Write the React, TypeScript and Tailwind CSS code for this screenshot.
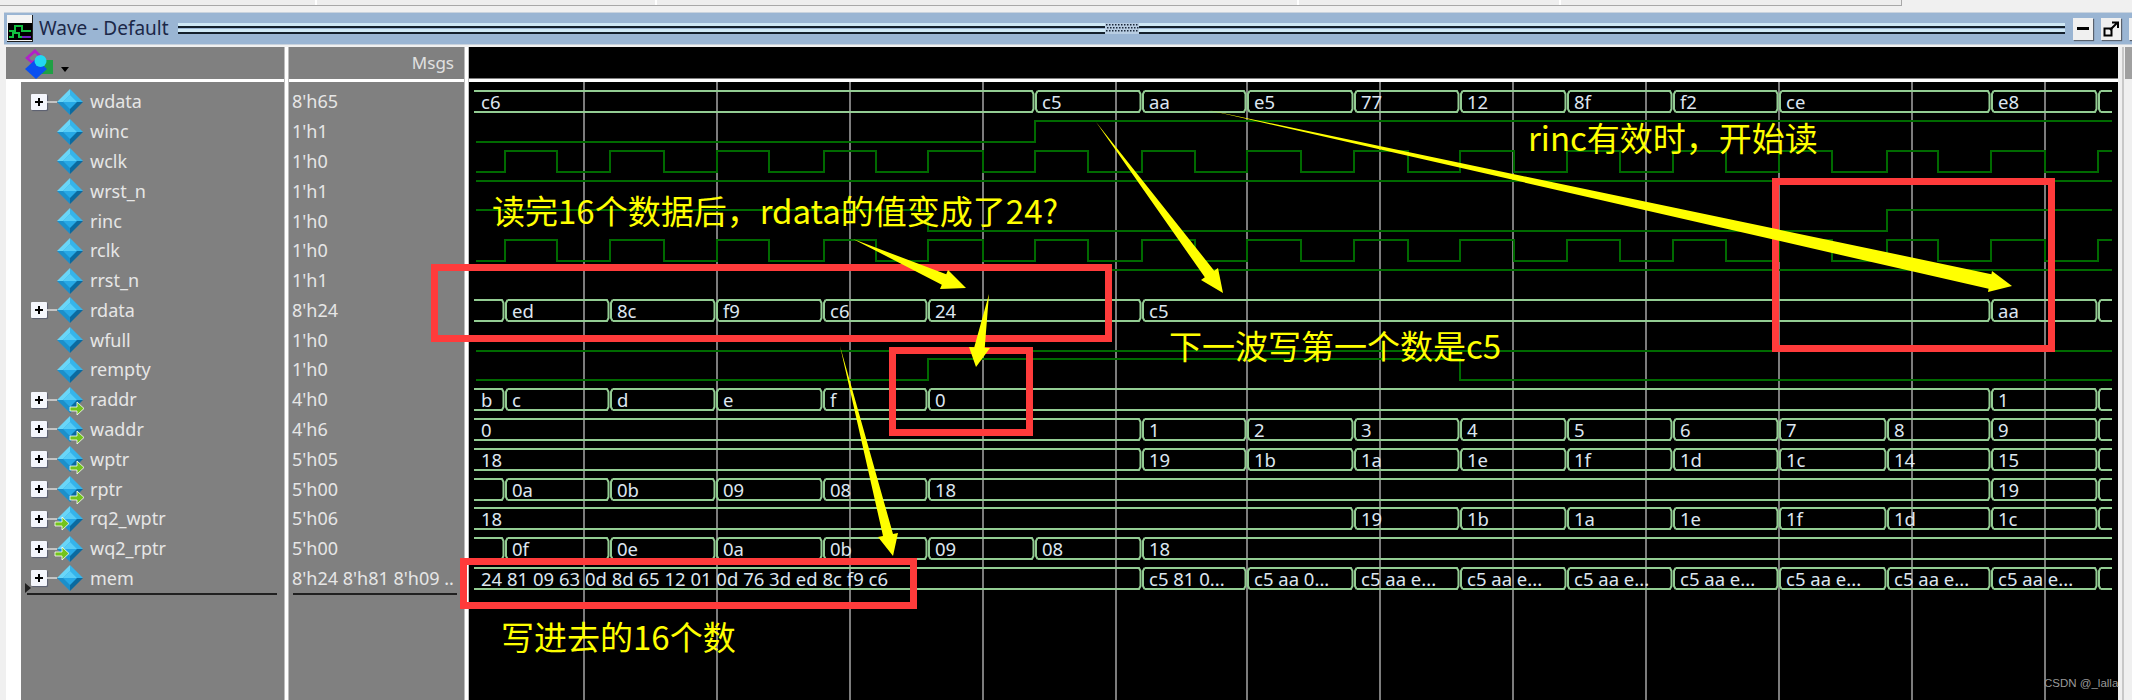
import React from "react";

type Signal = {
	name: string;
	value: string;
	expand?: boolean;
	arrow?: "out" | "in";
};

const signals: Signal[] = [
	{ name: "wdata", value: "8'h65", expand: true },
	{ name: "winc", value: "1'h1" },
	{ name: "wclk", value: "1'h0" },
	{ name: "wrst_n", value: "1'h1" },
	{ name: "rinc", value: "1'h0" },
	{ name: "rclk", value: "1'h0" },
	{ name: "rrst_n", value: "1'h1" },
	{ name: "rdata", value: "8'h24", expand: true },
	{ name: "wfull", value: "1'h0" },
	{ name: "rempty", value: "1'h0" },
	{ name: "raddr", value: "4'h0", expand: true, arrow: "out" },
	{ name: "waddr", value: "4'h6", expand: true, arrow: "out" },
	{ name: "wptr", value: "5'h05", expand: true, arrow: "out" },
	{ name: "rptr", value: "5'h00", expand: true, arrow: "out" },
	{ name: "rq2_wptr", value: "5'h06", expand: true, arrow: "in" },
	{ name: "wq2_rptr", value: "5'h00", expand: true, arrow: "in" },
	{ name: "mem", value: "8'h24 8'h81 8'h09 ..", expand: true },
];

const WAVE_START = 474;
const WAVE_END = 2112;
const rowTop = (i: number) => Math.round(91.3 + 29.79 * i);

const cursors = [584, 717, 850, 983, 1116, 1247, 1380, 1513, 1646, 1779, 1912, 2045];

const clockEdges = [
	505, 557, 610, 664, 717, 769, 824, 876, 928, 983, 1035, 1088, 1142, 1195, 1247, 1301, 1354,
	1408, 1460, 1514, 1567, 1620, 1673, 1726, 1779, 1832, 1887, 1938, 1991, 2045, 2098,
];

// row, level at the start (true = high), x of every toggle
const bits: [number, boolean, number[]][] = [
	[1, false, [1035]],
	[2, false, clockEdges],
	[3, true, []],
	[4, true, [928, 1887]],
	[5, false, clockEdges],
	[6, true, []],
	[8, false, []],
	[9, false, [928, 1460]],
];

// row, first label, then [x, label] per transition
const buses: [number, string, [number, string][]][] = [
	[0, "c6", [[1035, "c5"], [1142, "aa"], [1247, "e5"], [1354, "77"], [1460, "12"], [1567, "8f"], [1673, "f2"], [1779, "ce"], [1991, "e8"], [2098, ""]]],
	[7, "", [[505, "ed"], [610, "8c"], [716, "f9"], [823, "c6"], [928, "24"], [1142, "c5"], [1991, "aa"], [2098, ""]]],
	[10, "b", [[505, "c"], [610, "d"], [716, "e"], [823, "f"], [928, "0"], [1991, "1"], [2098, ""]]],
	[11, "0", [[1142, "1"], [1247, "2"], [1354, "3"], [1460, "4"], [1567, "5"], [1673, "6"], [1779, "7"], [1887, "8"], [1991, "9"], [2098, ""]]],
	[12, "18", [[1142, "19"], [1247, "1b"], [1354, "1a"], [1460, "1e"], [1567, "1f"], [1673, "1d"], [1779, "1c"], [1887, "14"], [1991, "15"], [2098, ""]]],
	[13, "", [[505, "0a"], [610, "0b"], [716, "09"], [823, "08"], [928, "18"], [1991, "19"], [2098, ""]]],
	[14, "18", [[1354, "19"], [1460, "1b"], [1567, "1a"], [1673, "1e"], [1779, "1f"], [1887, "1d"], [1991, "1c"], [2098, ""]]],
	[15, "", [[505, "0f"], [610, "0e"], [716, "0a"], [823, "0b"], [928, "09"], [1035, "08"], [1142, "18"]]],
	[16, "24 81 09 63 0d 8d 65 12 01 0d 76 3d ed 8c f9 c6", [[1142, "c5 81 0..."], [1247, "c5 aa 0..."], [1354, "c5 aa e..."], [1460, "c5 aa e..."], [1567, "c5 aa e..."], [1673, "c5 aa e..."], [1779, "c5 aa e..."], [1887, "c5 aa e..."], [1991, "c5 aa e..."], [2098, ""]]],
];

function bitPath(row: number, startHigh: boolean, toggles: number[]) {
	const hi = rowTop(row);
	const lo = hi + 21;
	let level = startHigh;
	let d = `M${WAVE_START + 2} ${level ? hi : lo}`;
	toggles.forEach((x) => {
		d += ` L${x} ${level ? hi : lo} L${x} ${level ? lo : hi}`;
		level = !level;
	});
	return d + ` L${WAVE_END} ${level ? hi : lo}`;
}

function busPath(row: number, xs: number[]) {
	const top = rowTop(row);
	const bot = top + 21;
	let d = "";
	let from = WAVE_START;
	xs.forEach((x) => {
		d += `M${from} ${top} L${x - 3} ${top} L${x - 1.5} ${top + 3} L${x - 1.5} ${bot - 3} L${x - 3} ${bot} L${from} ${bot} `;
		d += `M${x + 2.5} ${top} L${x + 1} ${top + 3} L${x + 1} ${bot - 3} L${x + 2.5} ${bot} `;
		from = x + 2.5;
	});
	return d + `M${from} ${top} L${WAVE_END} ${top} M${from} ${bot} L${WAVE_END} ${bot}`;
}

type Pt = [number, number];
type Arrow = { tail: Pt; tip: Pt; a: Pt; b: Pt; neck: number };

// tail is a point, the shaft widens up to the head
const arrows: Arrow[] = [
	{ tail: [853, 239], tip: [966, 288], a: [948, 270], b: [940, 289], neck: 0.55 },
	{ tail: [989, 294], tip: [976, 367], a: [969, 347], b: [990, 348], neck: 0.5 },
	{ tail: [1208, 110], tip: [2012, 286], a: [1992, 271], b: [1988, 292], neck: 0.7 },
	{ tail: [1096, 122], tip: [1223, 293], a: [1218, 268], b: [1201, 280], neck: 0.55 },
	{ tail: [840, 346], tip: [893, 556], a: [898, 533], b: [878, 537], neck: 0.5 },
];

function arrowPoints({ tail, tip, a, b, neck }: Arrow) {
	const cx = (a[0] + b[0]) / 2;
	const cy = (a[1] + b[1]) / 2;
	const inner = (p: Pt): Pt => [cx + (p[0] - cx) * neck, cy + (p[1] - cy) * neck];
	return [tail, inner(a), a, tip, b, inner(b)].map((p) => p.join(",")).join(" ");
}

function Diamond({ arrow }: { arrow?: "out" | "in" }) {
	return (
		<svg width="26" height="26" viewBox="0 0 26 26" className="shrink-0 overflow-visible">
			<polygon points="13,0 0,13 13,13" fill="#6ad6f8" />
			<polygon points="13,0 26,13 13,13" fill="#35b4ea" />
			<polygon points="0,13 13,26 13,13" fill="#1c8fca" />
			<polygon points="26,13 13,26 13,13" fill="#0b6a9f" />
			<polygon points="13,6 20,13 13,20 6,13" fill="#27a9e6" />
			<polygon points="13,6 20,13 6,13" fill="#58cdf6" />
			{arrow === "out" && (
				<polygon
					points="13,20 20,20 20,15 27,21.5 20,28 20,24 13,24"
					fill="#74c41c"
					stroke="#ffffff"
					strokeWidth="0.8"
				/>
			)}
			{arrow === "in" && (
				<polygon
					points="-2,16 5,16 5,11 12,17.5 5,24 5,20 -2,20"
					fill="#74c41c"
					stroke="#ffffff"
					strokeWidth="0.8"
				/>
			)}
		</svg>
	);
}

function PlusBox() {
	return (
		<div className="flex h-4 w-4 shrink-0 items-center justify-center rounded-[1px] bg-[#f4f6fc] shadow-[1px_1px_1px_#5a5f70]">
			<svg width="10" height="10" viewBox="0 0 10 10">
				<path d="M1 5 H9 M5 1 V9" stroke="#000000" strokeWidth="2" />
			</svg>
		</div>
	);
}

function SignalRow({ signal }: { signal: Signal }) {
	return (
		<div className="flex h-[29.79px] items-center pl-[10px]">
			{signal.expand ? (
				<>
					<PlusBox />
					<div className="h-[2px] w-[10px] bg-[#c4c4c4]" />
				</>
			) : (
				<div className="w-[26px]" />
			)}
			<Diamond arrow={signal.arrow} />
			<span className="ml-[7px] text-[18px] text-[#e6e6e6]">{signal.name}</span>
		</div>
	);
}

function HeaderIcon() {
	return (
		<svg width="30" height="30" viewBox="0 0 30 30" className="shrink-0">
			<polygon points="11,0 18,7 8,15 1,9" fill="#b021c8" />
			<polygon points="11,4 15,8 8,12 5,9" fill="#808080" />
			<rect x="14" y="11" width="15" height="14" fill="#1fa045" />
			<polygon points="12,10 23,20 12,30 1,20" fill="#0a50f0" />
			<circle cx="16.5" cy="12" r="6" fill="#22d8f0" />
		</svg>
	);
}

function TitleIcon() {
	return (
		<svg width="26" height="27" viewBox="0 0 26 27" className="shrink-0">
			<rect x="0" y="0" width="26" height="27" fill="#f4f4f4" />
			<rect x="25" y="0" width="1" height="27" fill="#202020" />
			<rect x="0" y="26" width="26" height="1" fill="#202020" />
			<rect x="1" y="8" width="24" height="17" fill="#000000" />
			<path d="M2 16 H8 V11 H15 V16 H24" stroke="#12c040" strokeWidth="2" fill="none" />
			<path d="M2 22 H6 V18 H12 V22 H18" stroke="#12c040" strokeWidth="2" fill="none" />
			<path d="M15 22 H24" stroke="#7020c0" strokeWidth="2" fill="none" />
		</svg>
	);
}

function Grip() {
	return (
		<div className="flex flex-1 flex-col">
			<div className="h-[3px] bg-[#cfe8f5]" />
			<div className="h-[2px] bg-[#14202c]" />
			<div className="h-[1px]" />
			<div className="h-[3px] bg-[#cfe8f5]" />
			<div className="h-[2px] bg-[#14202c]" />
		</div>
	);
}

function CenterGrip() {
	const dots: Pt[] = [];
	for (let x = 1; x < 32; x += 3) {
		for (let y = 0; y < 3; y++) dots.push([x + (y % 2), 1 + y * 3]);
	}
	return (
		<svg width="34" height="11" viewBox="0 0 34 11" className="shrink-0 bg-[#b8cde2]">
			{dots.map(([x, y]) => (
				<rect key={`${x}-${y}`} x={x} y={y} width="1.5" height="1.5" fill="#1c2a3c" />
			))}
		</svg>
	);
}

function WinButton({ children }: { children?: React.ReactNode }) {
	return (
		<div className="flex h-[22px] w-5 shrink-0 items-center justify-center bg-[#f0f0f0] shadow-[1px_1px_1px_#58606c]">
			{children}
		</div>
	);
}

function TitleBar() {
	return (
		<div className="ml-1 flex h-[33px] items-center overflow-hidden border-y border-[#c9d3de] bg-[#9ab5d3] pl-[3px]">
			<TitleIcon />
			<span className="ml-[6px] w-[139px] shrink-0 text-[19px] text-[#1c2848]">Wave - Default</span>
			<div className="flex w-[1887px] shrink-0 items-center">
				<Grip />
				<CenterGrip />
				<Grip />
			</div>
			<div className="ml-2 flex shrink-0 gap-2">
				<WinButton>
					<div className="h-[3px] w-3 bg-black" />
				</WinButton>
				<WinButton>
					<svg width="16" height="16" viewBox="0 0 16 16">
						<rect x="1.5" y="7.5" width="7" height="7" fill="none" stroke="#000" strokeWidth="2" />
						<path d="M7 9 L14 2 M9 1.5 H15 V7" fill="none" stroke="#000" strokeWidth="2" />
					</svg>
				</WinButton>
				<WinButton />
			</div>
		</div>
	);
}

function TopStrip() {
	return (
		<div className="h-3 bg-[#f0f0f0]">
			<div className="flex h-[6px] w-[1902px] border-b border-r border-[#a8a8a8] bg-[#eeeeee]">
				<div className="w-[317px] border-r-2 border-white" />
				<div className="w-[340px] border-r-2 border-white" />
				<div className="w-[642px] border-r-2 border-white" />
				<div className="w-[262px] border-r-2 border-white" />
			</div>
		</div>
	);
}

function WavePane() {
	return (
		<svg
			width="1649"
			height="618"
			viewBox="469 82 1649 618"
			className="block"
			style={{ fontFamily: '"Noto Sans", sans-serif' }}
		>
			{cursors.map((x) => (
				<line key={x} x1={x} y1="82" x2={x} y2="700" stroke="#7c7c7c" strokeWidth="2" />
			))}
			{bits.map(([row, high, toggles]) => (
				<path key={row} d={bitPath(row, high, toggles)} fill="none" stroke="#006a00" strokeWidth="2" />
			))}
			{buses.map(([row, first, items]) => (
				<g key={row}>
					<path d={busPath(row, items.map((t) => t[0]))} fill="none" stroke="#93cc93" strokeWidth="2" />
					<text x={WAVE_START + 7} y={rowTop(row) + 18} fontSize="18.5" fill="#dde6f0">
						{first}
					</text>
					{items.map(([x, label]) => (
						<text key={x} x={x + 7} y={rowTop(row) + 18} fontSize="18.5" fill="#dde6f0">
							{label}
						</text>
					))}
				</g>
			))}
		</svg>
	);
}

const boxes = [
	"left-[431px] top-[264px] h-[78px] w-[681px]",
	"left-[889px] top-[347px] h-[89px] w-[144px]",
	"left-[460px] top-[558px] h-[51px] w-[457px]",
	"left-[1772px] top-[178px] h-[174px] w-[283px]",
];

const notes = [
	{ text: "读完16个数据后，rdata的值变成了24?", pos: "left-[492px] top-[190px]" },
	{ text: "rinc有效时，开始读", pos: "left-[1528px] top-[117px]" },
	{ text: "下一波写第一个数是c5", pos: "left-[1169px] top-[325px]" },
	{ text: "写进去的16个数", pos: "left-[501px] top-[616px]" },
];

export default function App() {
	return (
		<div className="relative flex h-[700px] w-[2132px] flex-col overflow-hidden bg-[#f0f0f0] font-['Noto_Sans',sans-serif]">
			<TopStrip />
			<TitleBar />
			<div className="mt-[2px] flex min-h-0 flex-1 pl-[6px]">
				{/* signal names */}
				<div className="flex w-[278px] flex-col">
					<div className="flex h-[32px] items-start bg-[#808080] pl-[18px] pt-[2px]">
						<HeaderIcon />
						<div className="ml-[7px] mt-[18px] h-0 w-0 border-x-[4px] border-t-[5px] border-x-transparent border-t-black" />
					</div>
					<div className="h-[3px] bg-white" />
					<div className="flex flex-1">
						<div className="w-[15px] bg-white" />
						<div className="relative flex-1 bg-[#808080] pt-[5px]">
							{signals.map((s) => (
								<SignalRow key={s.name} signal={s} />
							))}
							<div className="ml-[6px] mr-[7px] h-[2px] bg-[#202020]" />
							<div className="absolute left-[4px] top-[501px] h-0 w-0 border-y-[5px] border-l-[6px] border-y-transparent border-l-[#202020]" />
						</div>
					</div>
				</div>
				<div className="w-[5px] border-x border-[#bdbdbd] bg-white" />
				{/* values */}
				<div className="flex w-[175px] flex-col">
					<div className="flex h-[32px] items-center justify-end bg-[#808080] pr-[10px] text-[17px] text-[#e0e0e0]">
						Msgs
					</div>
					<div className="h-[3px] bg-white" />
					<div className="flex-1 bg-[#808080] pt-[5px]">
						{signals.map((s) => (
							<div
								key={s.name}
								className="flex h-[29.79px] items-center overflow-hidden whitespace-nowrap pl-[3px] text-[18px] text-[#e6e6e6]"
							>
								{s.value}
							</div>
						))}
						<div className="ml-[4px] mr-[7px] h-[2px] bg-[#202020]" />
					</div>
				</div>
				<div className="w-[5px] border-x border-[#bdbdbd] bg-white" />
				{/* waves */}
				<div className="flex w-[1649px] flex-col bg-black">
					<div className="h-[32px] border-b border-[#808080]" />
					<div className="h-[3px] bg-white" />
					<WavePane />
				</div>
				{/* scroll bar */}
				<div className="ml-[4px] w-[2px] bg-[#c8c8c8]" />
				<div className="flex flex-1 flex-col pl-[1px]">
					<div className="h-[32px] bg-[#a0a0a0]" />
					<div className="mt-[3px] flex-1 bg-[#f0f0f0]" />
				</div>
			</div>

			{/* annotations drawn on top of the screenshot */}
			{boxes.map((pos) => (
				<div key={pos} className={`absolute border-[7px] border-[#ff3b3b] ${pos}`} />
			))}
			<svg width="2132" height="700" viewBox="0 0 2132 700" className="absolute left-0 top-0">
				{arrows.map((a) => (
					<polygon key={a.tail.join()} points={arrowPoints(a)} fill="#ffff00" />
				))}
			</svg>
			{notes.map((n) => (
				<div
					key={n.text}
					className={`absolute whitespace-nowrap font-['Noto_Sans_CJK_SC',sans-serif] text-[33px] leading-[40px] text-[#ffff00] ${n.pos}`}
				>
					{n.text}
				</div>
			))}
			<div className="absolute left-[2044px] top-[675px] font-['Liberation_Sans',sans-serif] text-[11.5px] text-[#9a9a9a]">
				CSDN @_lalla
			</div>
		</div>
	);
}
